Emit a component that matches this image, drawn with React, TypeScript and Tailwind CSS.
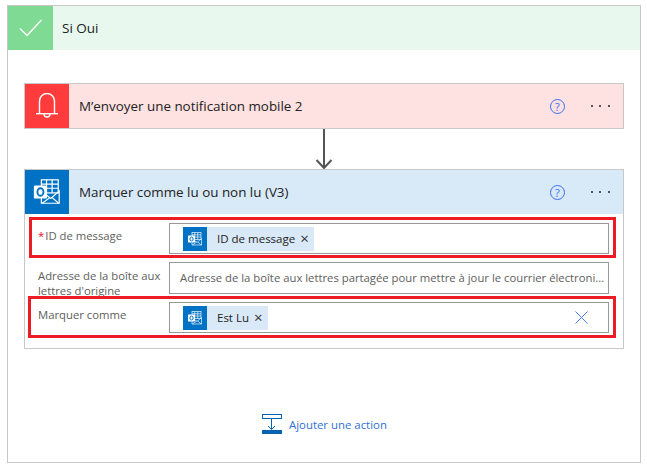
const OutlookIcon = ({ size }: { size: number }) => (
  <svg width={size} height={size} viewBox="0 0 32 32" fill="none" stroke="white" strokeWidth="1.3">
    <rect x="10" y="3" width="18" height="14" />
    <path d="M15.5 3v14M21.5 3v14M10 7.5h18M10 12h18" />
    <path d="M10 16v12h19V15l-9 8-5-4" />
    <path d="M11 28l8-6M28.5 28l-7-6" />
    <rect x="2" y="9" width="14" height="14" rx="1" fill="white" stroke="none" />
    <ellipse cx="9" cy="16" rx="3.2" ry="4" stroke="#0072c6" strokeWidth="2" />
  </svg>
)

const BellIcon = () => (
  <svg width="24" height="26" viewBox="0 0 24 26" fill="none" stroke="white" strokeWidth="1.4">
    <path d="M4.5 20.5V8a7.5 7.5 0 0 1 15 0v12.5" />
    <path d="M1 20.7h22" />
    <path d="M9 21a3 3 0 0 0 6 0" />
  </svg>
)

const HelpIcon = () => (
  <span className="w-[15px] h-[15px] rounded-full border border-[#3b6ef0] text-[#3b6ef0] text-[11px] leading-none flex items-center justify-center">
    ?
  </span>
)

const Dots = () => (
  <span className="flex gap-[6.6px]">
    <span className="w-[2px] h-[2px] rounded-full bg-[#222]" />
    <span className="w-[2px] h-[2px] rounded-full bg-[#222]" />
    <span className="w-[2px] h-[2px] rounded-full bg-[#222]" />
  </span>
)

const CardHeader = ({ icon, color, bg, title }: { icon: React.ReactNode; color: string; bg: string; title: string }) => (
  <div className={`h-[44px] flex items-center ${bg}`}>
    <div className={`w-[44px] h-full flex items-center justify-center ${color}`}>{icon}</div>
    <span className="ml-[10px] text-[13.4px] text-[#222] flex-1">{title}</span>
    <div className="mr-[26px]"><HelpIcon /></div>
    <div className="mr-[13px]"><Dots /></div>
  </div>
)

const Chip = ({ label }: { label: string }) => (
  <div className="h-[24px] flex items-center bg-[#d9e9f8]">
    <div className="w-[24px] h-full bg-[#0072c6] flex items-center justify-center">
      <OutlookIcon size={16} />
    </div>
    <span className="ml-[10px] text-[11.5px] text-[#222]">{label}</span>
    <span className="ml-[5px] mr-[5px] text-[15px] leading-none text-[#333]">×</span>
  </div>
)

export default function App() {
  return (
    <div className="min-h-screen bg-white pt-[5px] pl-[7px] font-['Open_Sans',sans-serif]">
      <div className="w-[634px] h-[458px] border border-[#c8c8c8] flex flex-col">
        <div className="h-[44px] flex items-center bg-[#e9f8ee]">
          <div className="w-[45px] h-full bg-[#7fdb93] flex items-center justify-center">
            <svg width="24" height="18" viewBox="0 0 24 18" fill="none" stroke="white" strokeWidth="1.4">
              <path d="M1 9.5l7 7L22.5 1" />
            </svg>
          </div>
          <span className="ml-[9px] text-[13.5px] text-[#222]">Si Oui</span>
        </div>

        <div className="ml-[16px] mt-[33px] w-[600px] border border-[#c8c8c8]">
          <CardHeader icon={<BellIcon />} color="bg-[#ff3b3b]" bg="bg-[#fee1e1]" title="M’envoyer une notification mobile 2" />
        </div>

        <div className="ml-[16px] w-[600px] h-[40px] flex justify-center">
          <svg width="20" height="40" viewBox="0 0 20 40" fill="none" stroke="#555" strokeWidth="2">
            <path d="M10 0v39M2.5 31l7.5 8 7.5-8" />
          </svg>
        </div>

        <div className="relative ml-[16px] w-[600px] h-[180px] border border-[#c8c8c8]">
          <CardHeader icon={<OutlookIcon size={30} />} color="bg-[#0072c6]" bg="bg-[#d8e9f8]" title="Marquer comme lu ou non lu (V3)" />

          <div className="pl-[13px] pr-[14px] pt-[9px] flex flex-col gap-[8px] text-[11.3px] text-[#605e5c]">
            <div className="flex h-[31px]">
              <div className="w-[131px] pt-[5px]"><span className="text-[#e81123] mr-[1px]">*</span>ID de message</div>
              <div className="flex-1 border border-[#999] pl-[13px] flex items-center">
                <Chip label="ID de message" />
              </div>
            </div>
            <div className="flex h-[32px]">
              <div className="w-[131px] leading-[15px] pt-[6px]">Adresse de la boîte aux lettres d'origine</div>
              <div className="flex-1 min-w-0 border border-[#999] pl-[10px] flex items-center">
                <span className="whitespace-nowrap">Adresse de la boîte aux lettres partagée pour mettre à jour le courrier électroni...</span>
              </div>
            </div>
            <div className="flex h-[31px]">
              <div className="w-[131px] pt-[5px]">Marquer comme</div>
              <div className="flex-1 border border-[#999] pl-[13px] pr-[20px] flex items-center justify-between">
                <Chip label="Est Lu" />
                <svg width="13" height="13" viewBox="0 0 13 13" fill="none" stroke="#4a7dff" strokeWidth="1">
                  <path d="M.5.5l12 12M12.5.5l-12 12" />
                </svg>
              </div>
            </div>
          </div>

          <div className="absolute left-[4px] top-[47px] w-[587px] h-[41px] border-[3px] border-[#ed1c24]" />
          <div className="absolute left-[3px] top-[126px] w-[588px] h-[42px] border-[3px] border-[#ed1c24]" />
        </div>

        <div className="mt-[65px] ml-[254px] flex items-center gap-[7px]">
          <svg width="20" height="20" viewBox="0 0 20 20" fill="none">
            <rect x=".5" y=".5" width="19" height="4" stroke="#0063b1" />
            <path d="M9.5 5v10M6 12l3.5 3.5L13 12" stroke="#0063b1" />
            <rect y="16" width="20" height="4" fill="#0063b1" />
          </svg>
          <span className="pt-[1px] text-[11.4px] text-[#2f6fd6]">Ajouter une action</span>
        </div>
      </div>
    </div>
  )
}
